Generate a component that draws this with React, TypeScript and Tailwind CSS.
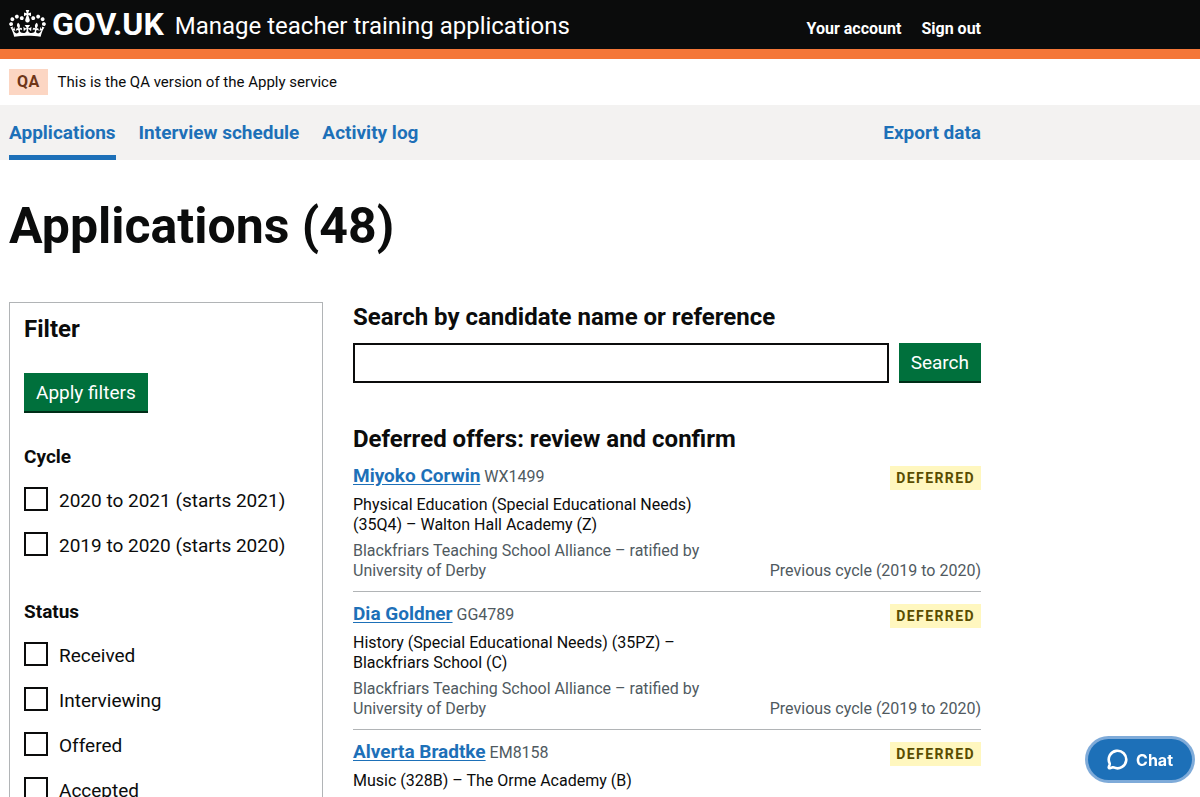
import { MessageCircle } from "lucide-react";

type Application = {
  name: string;
  reference: string;
  course: string;
  provider: string;
};

const applications: Application[] = [
  {
    name: "Miyoko Corwin",
    reference: "WX1499",
    course: "Physical Education (Special Educational Needs) (35Q4) – Walton Hall Academy (Z)",
    provider: "Blackfriars Teaching School Alliance – ratified by University of Derby",
  },
  {
    name: "Dia Goldner",
    reference: "GG4789",
    course: "History (Special Educational Needs) (35PZ) – Blackfriars School (C)",
    provider: "Blackfriars Teaching School Alliance – ratified by University of Derby",
  },
  {
    name: "Alverta Bradtke",
    reference: "EM8158",
    course: "Music (328B) – The Orme Academy (B)",
    provider: "Blackfriars Teaching School Alliance – ratified by University of Derby",
  },
];

const filters = [
  { legend: "Cycle", options: ["2020 to 2021 (starts 2021)", "2019 to 2020 (starts 2020)"] },
  { legend: "Status", options: ["Received", "Interviewing", "Offered", "Accepted"] },
];

function Crown() {
  return (
    <svg viewBox="0 0 132 97" className="mb-0.5 h-[27px] w-[37px] shrink-0" fill="currentColor" fillRule="evenodd" aria-hidden="true">
      <path d="M25 30.2c3.5 1.5 7.7-.2 9.1-3.7 1.5-3.6-.2-7.8-3.9-9.2-3.6-1.4-7.6.3-9.1 3.9-1.4 3.5.3 7.5 3.9 9zM9 39.5c3.6 1.5 7.8-.2 9.2-3.7 1.5-3.6-.2-7.8-3.9-9.1-3.6-1.5-7.6.2-9.1 3.8-1.4 3.5.3 7.5 3.8 9zM4.4 57.2c3.5 1.5 7.7-.2 9.1-3.8 1.5-3.6-.2-7.7-3.9-9.1-3.5-1.5-7.6.3-9.1 3.8-1.4 3.5.3 7.6 3.9 9.1zm38.3-21.4c3.5 1.5 7.7-.2 9.1-3.8 1.5-3.6-.2-7.7-3.9-9.1-3.6-1.5-7.6.3-9.1 3.8-1.3 3.6.4 7.7 3.9 9.1zm64.4-5.6c-3.6 1.5-7.8-.2-9.1-3.7-1.5-3.6.2-7.8 3.8-9.2 3.6-1.4 7.7.3 9.2 3.9 1.3 3.5-.4 7.5-3.9 9zm15.9 9.3c-3.6 1.5-7.7-.2-9.1-3.7-1.5-3.6.2-7.8 3.7-9.1 3.6-1.5 7.7.2 9.2 3.8 1.5 3.5-.3 7.5-3.8 9zm4.7 17.7c-3.6 1.5-7.8-.2-9.2-3.8-1.5-3.6.2-7.7 3.9-9.1 3.6-1.5 7.7.3 9.2 3.8 1.3 3.5-.4 7.6-3.9 9.1zM89.3 35.8c-3.6 1.5-7.8-.2-9.2-3.8-1.4-3.6.2-7.7 3.9-9.1 3.6-1.5 7.7.3 9.2 3.8 1.4 3.6-.3 7.7-3.9 9.1zM69.7 17.7l8.9 4.7V9.3l-8.9 2.8c-.2-.3-.5-.6-.9-.9L72.4 0H59.6l3.5 11.2c-.3.3-.6.5-.9.9l-8.8-2.8v13.1l8.8-4.7c.3.3.6.7.9.9l-5 15.4v.1c-.2.8-.4 1.6-.4 2.4 0 4.1 3.1 7.5 7 8.1h.2c.3 0 .7.1 1 .1.4 0 .7 0 1-.1h.2c4-.6 7.1-4.1 7.1-8.1 0-.8-.1-1.7-.4-2.4V34l-5.1-15.4c.4-.2.7-.6 1-.9zM66 92.8c16.9 0 32.8 1.1 47.1 3.2 4-16.9 8.9-26.7 14-33.5l-9.6-3.4c1 4.9 1.1 7.2 0 10.2-1.5-1.4-3-4.3-4.2-8.7L108.6 76c2.8-2 5-3.2 7.5-3.3-4.4 9.4-10 11.9-13.6 11.2-4.3-.8-6.3-4.6-5.6-7.9 1-4.7 5.7-5.9 8-.5 4.3-8.7-3-11.4-7.6-8.8 7.1-7.2 7.9-13.5 2.1-21.1-8 6.1-8.1 12.3-4.5 20.8-4.7-5.4-12.1-2.5-9.5 6.2 3.4-5.2 7.9-2 7.2 3.1-.6 4.3-6.4 7.8-13.5 7.2-10.3-.9-10.9-8-11.2-13.8 2.5-.5 7.1 1.8 11 7.3L80.2 60c-4.1 4.4-8 5.3-12.3 5.4 1.4-4.4 8-11.6 8-11.6H55.5s6.4 7.2 7.9 11.6c-4.2-.1-8-1-12.3-5.4l1.4 16.4c3.9-5.5 8.5-7.7 10.9-7.3-.3 5.8-.9 12.8-11.1 13.8-7.2.6-12.9-2.9-13.5-7.2-.7-5 3.8-8.3 7.1-3.1 2.7-8.7-4.6-11.6-9.4-6.2 3.7-8.5 3.6-14.7-4.6-20.8-5.8 7.6-5 13.9 2.2 21.1-4.7-2.6-11.9.1-7.7 8.8 2.3-5.5 7.1-4.2 8.1.5.7 3.3-1.3 7.1-5.7 7.9-3.5.7-9-1.8-13.5-11.2 2.5.1 4.7 1.3 7.5 3.3l-4.7-15.4c-1.2 4.4-2.7 7.2-4.3 8.7-1.1-3-.9-5.3 0-10.2l-9.5 3.4c5 6.9 9.9 16.7 14 33.5 14.8-2.1 30.8-3.2 47.7-3.2z" />
    </svg>
  );
}

function Header() {
  return (
    <header className="border-b-10 border-[#f47738] bg-[#0b0c0c] text-white">
      <div className="flex max-w-[990px] items-center justify-between px-[9px] pb-px">
        <div className="flex items-center gap-[11px]">
          <a href="#" className="flex items-center gap-[6px] text-[32px] leading-12 font-bold">
            <Crown />
            GOV.UK
          </a>
          <a href="#" className="pt-1 text-2xl">
            Manage teacher training applications
          </a>
        </div>
        <nav aria-label="Account" className="flex gap-5 pt-[10px] text-base font-bold">
          <a href="#">Your account</a>
          <a href="#">Sign out</a>
        </nav>
      </div>
    </header>
  );
}

function PrimaryNav() {
  return (
    <nav aria-label="Primary" className="bg-[#f3f2f1]">
      <div className="flex max-w-[990px] gap-[23px] px-[9px] text-[19px] leading-[25px] font-bold text-[#1d70b8]">
        <a href="#" aria-current="page" className="border-b-5 border-[#1d70b8] pt-[15px] pb-[10px]">
          Applications
        </a>
        <a href="#" className="py-[15px]">
          Interview schedule
        </a>
        <a href="#" className="py-[15px]">
          Activity log
        </a>
        <a href="#" className="ml-auto py-[15px]">
          Export data
        </a>
      </div>
    </nav>
  );
}

function FilterPanel() {
  return (
    <form className="border border-[#b1b4b6] px-[14px] pt-[13px] pb-5">
      <h2 className="text-2xl leading-[26px] font-bold">Filter</h2>
      <button
        type="button"
        className="mt-[31px] h-10 border-b-2 border-[#002d18] bg-[#00703c] px-3 pt-[2px] text-[19px] text-white"
      >
        Apply filters
      </button>
      {filters.map((group) => (
        <fieldset key={group.legend} className="mt-[31px] mb-[43px]">
          <legend className="text-[19px] leading-[25px] font-bold">{group.legend}</legend>
          <div className="mt-[18px] flex flex-col gap-[21px]">
            {group.options.map((option) => (
              <label key={option} className="flex h-6 items-center gap-[11px] text-[19px]">
                <input type="checkbox" className="size-6 shrink-0 appearance-none border-2 border-[#0b0c0c] bg-white" />
                <span className="pt-1">{option}</span>
              </label>
            ))}
          </div>
        </fieldset>
      ))}
    </form>
  );
}

function ApplicationCard({ application }: { application: Application }) {
  return (
    <li className="flex justify-between border-b border-[#b1b4b6] py-[10px] text-base leading-5">
      <div className="w-[57%]">
        <h3 className="leading-[26px] text-[#505a5f]">
          <a href="#" className="text-[19px] leading-5 font-bold text-[#1d70b8] underline underline-offset-2">
            {application.name}
          </a>{" "}
          {application.reference}
        </h3>
        <p className="mt-[5px]">{application.course}</p>
        <p className="mt-[6px] text-[#505a5f]">{application.provider}</p>
      </div>
      <div className="flex flex-col items-end justify-between pt-[2px]">
        <strong className="bg-[#fff7bf] px-[6px] py-[2px] text-sm leading-5 font-bold tracking-widest text-[#594d00] uppercase">
          Deferred
        </strong>
        <p className="text-[#505a5f]">Previous cycle (2019 to 2020)</p>
      </div>
    </li>
  );
}

export default function App() {
  return (
    <div className="min-h-screen bg-white font-[Roboto,sans-serif] text-[#0b0c0c]">
      <Header />
      <div className="flex max-w-[990px] items-center gap-[10px] px-[9px] py-[10px] text-base">
        <strong className="bg-[#fcd6c3] px-2 py-px font-bold tracking-wide text-[#6e3619]">QA</strong>
        <span className="text-[15px]">This is the QA version of the Apply service</span>
      </div>
      <PrimaryNav />
      <main className="max-w-[990px] px-[9px] pt-10">
        <h1 className="text-[50px] leading-[52px] font-bold">Applications (48)</h1>
        <div className="mt-[50px] grid grid-cols-[1fr_2fr] items-start gap-[30px]">
          <FilterPanel />
          <div>
            <form role="search">
              <label htmlFor="search" className="block text-2xl leading-[30px] font-bold">
                Search by candidate name or reference
              </label>
              <div className="mt-[11px] flex gap-[10px]">
                <input id="search" type="text" className="h-10 min-w-0 flex-1 border-2 border-[#0b0c0c] px-2 text-[19px]" />
                <button
                  type="button"
                  className="h-10 border-b-2 border-[#002d18] bg-[#00703c] px-3 pt-[2px] text-[19px] text-white"
                >
                  Search
                </button>
              </div>
            </form>
            <h2 className="mt-[41px] text-2xl leading-[30px] font-bold">Deferred offers: review and confirm</h2>
            <ul>
              {applications.map((application) => (
                <ApplicationCard key={application.reference} application={application} />
              ))}
            </ul>
          </div>
        </div>
      </main>
      <button
        type="button"
        className="fixed right-2 bottom-[17px] flex h-[41px] items-center gap-2 rounded-full bg-[#1d70b8] px-[19px] font-[Inter,sans-serif] text-base font-bold text-white ring-3 ring-[#7fabd9]"
      >
        <MessageCircle className="size-[21px]" strokeWidth={3} aria-hidden="true" />
        Chat
      </button>
    </div>
  );
}
